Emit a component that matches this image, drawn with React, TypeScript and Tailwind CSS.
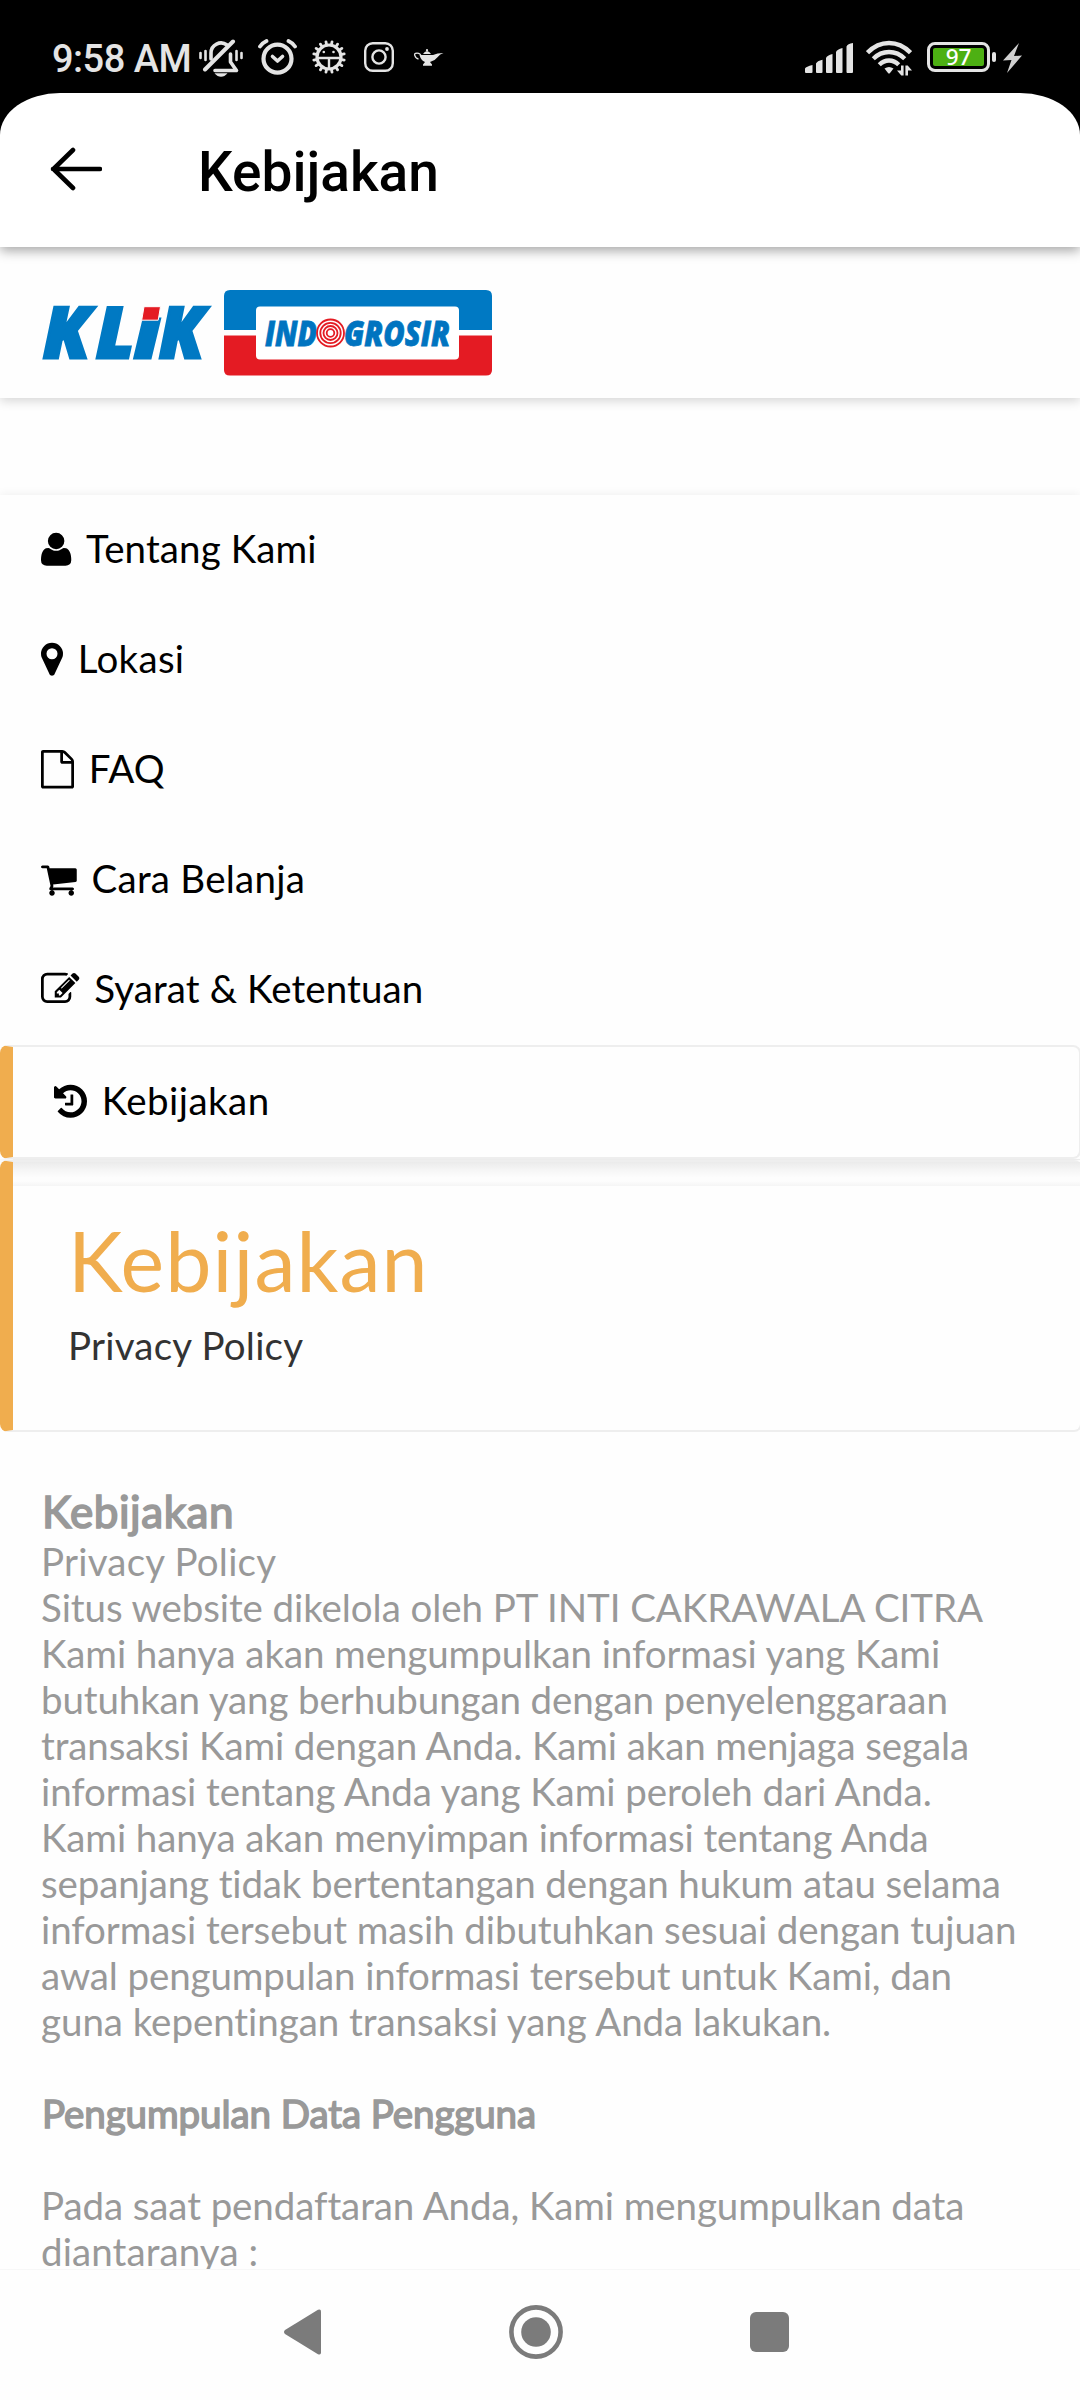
import React from "react";

const LATO = "font-[Lato,sans-serif]";

/* Font icons on a 1792-unit em, y axis pointing up from the baseline. */
function Glyph({ d, advance }: { d: string; advance: number }) {
  return (
    <svg
      viewBox={`0 -1536 ${advance} 1792`}
      style={{ width: (advance / 1792) * 38.5, height: 38.5 }}
      className="mr-[14.8px] mt-[2px] shrink-0 overflow-visible"
      fill="currentColor"
    >
      <path transform="scale(1,-1)" d={d} />
    </svg>
  );
}

/* Font icons on a 1792 square grid, y axis pointing down. */
function GridGlyph({ d, x, advance }: { d: string; x: number; advance: number }) {
  return (
    <svg
      viewBox={`${x} 0 ${advance} 1792`}
      style={{ width: (advance / 1792) * 38.5, height: 38.5 }}
      className="mr-[14.8px] mt-[2px] shrink-0 overflow-visible"
      fill="currentColor"
    >
      <path d={d} />
    </svg>
  );
}

const USER =
  "M1408 131q0-120-73-189.5t-194-69.5h-874q-121 0-194 69.5t-73 189.5q0 53 3.5 103.5t14 109t26.5 108.5t43 97.5t62 81t85.5 53.5t111.5 20q9 0 42-21.5t74.5-48t108-48t133.5-21.5t133.5 21.5t108 48t74.5 48t42 21.5q61 0 111.5-20t85.5-53.5t62-81t43-97.5t26.5-108.5t14-109t3.5-103.5zM1088 1024q0-159-112.5-271.5t-271.5-112.5t-271.5 112.5t-112.5 271.5t112.5 271.5t271.5 112.5t271.5-112.5t112.5-271.5z";
const MARKER =
  "M1152 640q0-106-75-181t-181-75-181 75-75 181 75 181 181 75 181-75 75-181zm256 0q0 109-33 179l-364 774q-16 33-47.5 52t-67.5 19-67.5-19-46.5-52l-365-774q-33-70-33-179 0-212 150-362t362-150 362 150 150 362z";
const FILE =
  "M1596 380q28 28 48 76t20 88v1152q0 40-28 68t-68 28h-1344q-40 0-68-28t-28-68v-1600q0-40 28-68t68-28h896q40 0 88 20t76 48zm-444-244v376h376q-10-29-22-41l-313-313q-12-12-41-22zm384 1528v-1024h-416q-40 0-68-28t-28-68v-416h-768v1536h1280z";
const CART =
  "M704 1536q0 52-38 90t-90 38-90-38-38-90 38-90 90-38 90 38 38 90zm896 0q0 52-38 90t-90 38-90-38-38-90 38-90 90-38 90 38 38 90zm128-1088v512q0 24-16.5 42.5t-40.5 21.5l-1044 122q13 60 13 70 0 16-24 64h920q26 0 45 19t19 45-19 45-45 19h-1024q-26 0-45-19t-19-45q0-11 8-31.5t16-36 21.5-40 15.5-29.5l-177-823h-204q-26 0-45-19t-19-45 19-45 45-19h256q16 0 28.5 6.5t19.5 15.5 13 24.5 8 26 5.5 29.5 4.5 26h1201q26 0 45 19t19 45z";
const EDIT =
  "M888 1184l116-116-152-152-116 116v56h96v96h56zm440-720q-16-16-33 1l-350 350q-17 17-1 33t33-1l350-350q17-17 1-33zm80 594v190q0 119-84.5 203.5t-203.5 84.5h-832q-119 0-203.5-84.5t-84.5-203.5v-832q0-119 84.5-203.5t203.5-84.5h832q63 0 117 25 15 7 18 23 3 17-9 29l-49 49q-14 14-32 8-23-6-45-6h-832q-66 0-113 47t-47 113v832q0 66 47 113t113 47h832q66 0 113-47t47-113v-126q0-13 9-22l64-64q15-15 35-7t20 29zm-96-738l288 288-672 672h-288v-288zm444 132l-92 92-288-288 92-92q28-28 68-28t68 28l152 152q28 28 28 68t-28 68z";
const HISTORY =
  "M1664 896q0 156-61 298t-164 245-245 164-298 61q-172 0-327-72.5t-264-204.5q-7-10-6.5-22.5t8.5-20.5l137-138q10-9 25-9 16 2 23 12 73 95 179 147t225 52q104 0 198.5-40.5t163.5-109.5 109.5-163.5 40.5-198.5-40.5-198.5-109.5-163.5-163.5-109.5-198.5-40.5q-98 0-188 35.5t-160 101.5l137 138q31 30 14 69-17 40-59 40h-448q-26 0-45-19t-19-45v-448q0-42 40-59 39-17 69 14l130 129q107-101 244.5-156.5t284.5-55.5q156 0 298 61t245 164 164 245 61 298zm-640-288v448q0 14-9 23t-23 9h-320q-14 0-23-9t-9-23v-64q0-14 9-23t23-9h224v-352q0-14 9-23t23-9h64q14 0 23 9t9 23z";

function StatusBar() {
  const teeth = Array.from({ length: 16 }, (_, i) => i * 22.5 + 11.25);
  return (
    <div className="flex h-[93px] items-start bg-black pl-[52px] pt-[37px] text-[#e4e4e4]">
      <span className="w-[147px] whitespace-nowrap font-[Roboto,sans-serif] text-[38px] font-medium leading-[44px] tracking-[-0.5px]">
        9:58 AM
      </span>
      <svg className="mt-[2px] h-[38px] w-[44px]" viewBox="0 0 44 38" fill="none" stroke="currentColor" strokeLinecap="round">
        <path d="M12 20V14a10 10 0 0 1 16-8M31.500 15v8l6 8.500H16" strokeWidth="3.6" strokeLinejoin="round" />
        <path d="M6 30.500L34 2.500" strokeWidth="4" />
        <path d="M1.500 14v5M6.500 12v9M37.500 12v9M42.500 14v5" strokeWidth="2.600" />
        <path d="M15.500 34.300h13q-3 3.500-6.500 3.500t-6.500-3.500z" fill="currentColor" stroke="none" />
      </svg>
      <svg className="ml-[15px] mt-[2px] h-[37px] w-[39px]" viewBox="0 0 39 37" fill="none" stroke="currentColor" strokeLinecap="round">
        <circle cx="19.500" cy="19.700" r="14" strokeWidth="4.200" />
        <path d="M2 7.500q2.500-3.700 6.500-5.500M37 7.500q-2.500-3.700-6.500-5.500" strokeWidth="3.800" />
        <path d="M14.500 17.500l5 4.500 5-4.500" strokeWidth="3.600" strokeLinejoin="round" />
      </svg>
      <svg className="ml-[15px] mt-[3px] h-[34px] w-[34px]" viewBox="-17 -17 34 34" fill="none" stroke="currentColor">
        <circle r="12" strokeWidth="3.200" />
        {teeth.map((a) => (
          <path key={a} d="M0-13V-15.500" strokeWidth="2.800" strokeLinecap="round" transform={`rotate(${a})`} />
        ))}
        <path d="M-12 1H12M0 1V13" strokeWidth="2.400" />
        <circle cx="-5.200" cy="-5" r="1.300" fill="currentColor" stroke="none" />
        <circle cx="4.500" cy="-5" r="1.300" fill="currentColor" stroke="none" />
      </svg>
      <svg className="ml-[18px] mt-[5px] h-[30px] w-[30px]" viewBox="0 0 30 30" fill="none" stroke="currentColor" strokeWidth="2.400">
        <rect x="1.200" y="1.200" width="27.600" height="27.600" rx="7.500" />
        <circle cx="15" cy="15" r="6.600" />
        <circle cx="23" cy="7" r="1.900" fill="currentColor" stroke="none" />
      </svg>
      <svg className="ml-[20px] mt-[12px] h-[17px] w-[30px]" viewBox="0 0 30 17" fill="currentColor">
        <circle cx="13" cy="1.200" r="1.100" />
        <path d="M9 5q1.500-2.600 4-2.900 2.500.3 4 2.900z" />
        <path d="M5.500 6H19q4-1.800 10.500-2-3.500.8-6 4.200-2.500 3.500-7.500 4.800l2 2.500v1.300H9v-1.300l2-2.500Q7 11.500 5.500 6z" />
        <path d="M7.500 8Q6.500 4.200 3 4.200T1 6.800Q1.200 9 4.500 10.200" fill="none" stroke="currentColor" strokeWidth="1.300" />
      </svg>
      <svg className="ml-[361px] mt-[6px] h-[30px] w-[48px]" viewBox="0 0 48 30" fill="currentColor">
        <path d="M0 29V25.500Q1 23.500 7.500 22V29q0 1-1 1H1q-1 0-1-1zM11 29V20.500Q12 18 17.500 16.700V29q0 1-1 1h-4.500q-1 0-1-1zM21 29V15Q22 12.500 27.500 11V29q0 1-1 1H22q-1 0-1-1zM31 29V9Q32 6.500 37.500 5V29q0 1-1 1H32q-1 0-1-1zM41.500 29V3.500Q42.500.5 48 0V29q0 1-1 1h-4.500q-1 0-1-1z" />
      </svg>
      <svg className="ml-[13px] mt-[3px] h-[36px] w-[46px]" viewBox="0 0 46 36" fill="none" stroke="currentColor">
        <path d="M1.500 12.700Q11 3 23 3t21.500 9.700M7.300 18.700Q14 12 23 12t15.700 6.700M13.300 24.700Q17.500 20.500 23 20.500t9.700 4.200" strokeWidth="4.400" />
        <path d="M18.500 28.500q4.500-3 9 0L24 33q-1 1-2 0z" fill="currentColor" stroke="none" />
        <path d="M35 25.500h2.600v10h-2.300L31 30.500h4zM39.400 25.500h2.300l4.300 5h-4v5h-2.600z" fill="currentColor" stroke="none" />
      </svg>
      <div className="ml-[15px] mt-[5px] flex h-[30px] w-[63px] rounded-[8px] border-[3px] border-[#e4e4e4] p-[3px]">
        <span className="flex flex-1 items-center justify-center rounded-[2px] bg-[#4db013] font-['Noto_Sans',sans-serif] text-[22.500px] font-medium leading-none text-white">
          97
        </span>
      </div>
      <span className="ml-[2px] mt-[10px] h-[10px] w-[4px] translate-y-[5px] rounded-[2px] bg-[#e4e4e4]" />
      <svg className="ml-[7px] mt-[6px] h-[30px] w-[19px] text-[#d0d0d0]" viewBox="0 0 19 30" fill="currentColor">
        <path d="M16 0L0 17.500l8.500-.5L4 30 19 12.500l-8 .5z" />
      </svg>
    </div>
  );
}

function Header() {
  return (
    <div className="bg-black">
      <header className="relative z-20 flex h-[154px] items-start rounded-t-[60px_42px] bg-white shadow-[0_4px_12px_rgba(0,0,0,0.34)] [clip-path:inset(0_0_-30px_0)]">
        <svg className="ml-[50px] mt-[54px] h-[44px] w-[52px]" viewBox="0 0 52 44" fill="none" stroke="#000" strokeWidth="4.600" strokeLinecap="round" strokeLinejoin="round">
          <path d="M50 22H3M23 3L3.500 22 23 41" />
        </svg>
        <h1 className="ml-[96px] mt-[46px] whitespace-nowrap font-[Roboto,sans-serif] text-[55px] font-medium leading-[66px] text-black">
          Kebijakan
        </h1>
      </header>
    </div>
  );
}

function Logo() {
  const face = "font-['Open_Sans',sans-serif] font-extrabold italic";
  return (
    <svg className="h-[86px] w-[452px] overflow-visible" viewBox="41 290 452 86">
      <g className={`${face} text-[71px]`} fill="#0079c3" stroke="#0079c3" strokeWidth="3">
        <text x="43" y="358.300" textLength="47" lengthAdjust="spacingAndGlyphs">K</text>
        <text x="96" y="358.300" textLength="38" lengthAdjust="spacingAndGlyphs">L</text>
        <text x="134" y="358.300" textLength="26" lengthAdjust="spacingAndGlyphs">ı</text>
        <text x="159" y="358.300" textLength="45" lengthAdjust="spacingAndGlyphs">K</text>
      </g>
      <path d="M144 306.700h16.500l-2.300 13.500h-16.500z" fill="#e41b23" stroke="#fff" strokeWidth="1" />
      <path d="M224 330V296q0-6 6-6h256q6 0 6 6v34z" fill="#0079c3" />
      <path d="M224 335.500V370q0 5.500 6 5.500h256q6 0 6-5.500V335.500z" fill="#e41b23" />
      <rect x="256" y="306.500" width="203" height="53" rx="4" fill="#fff" />
      <g className={`${face} text-[36px]`} fill="#0074c0" stroke="#0074c0" strokeWidth=".8">
        <text x="265" y="345.500" textLength="52" lengthAdjust="spacingAndGlyphs">IND</text>
        <text x="344" y="345.500" textLength="106" lengthAdjust="spacingAndGlyphs">GROSIR</text>
      </g>
      <g fill="#fff" stroke="#e41b23" strokeWidth="1.800">
        <circle cx="330.500" cy="333" r="13.500" />
        <circle cx="330.500" cy="333" r="10.200" />
        <circle cx="330.500" cy="333" r="7" />
        <circle cx="330.500" cy="333" r="3.800" />
      </g>
    </svg>
  );
}

const row = "flex h-[110px] items-center pb-[4px] pl-[41px] whitespace-nowrap";

function Menu() {
  return (
    <nav className={`${LATO} bg-[#fefefe] text-[38.500px] leading-[46px] text-black shadow-[0_0_10px_rgba(0,0,0,0.07)]`}>
      <a className={row}><Glyph d={USER} advance={1408} /><span className="tracking-[0.1px]">Tentang Kami</span></a>
      <a className={row}><GridGlyph d={MARKER} x={384} advance={1024} /><span className="tracking-[0.3px]">Lokasi</span></a>
      <a className={row}><GridGlyph d={FILE} x={128} advance={1536} /><span>FAQ</span></a>
      <a className={row}><GridGlyph d={CART} x={64} advance={1664} /><span className="tracking-[0.25px]">Cara Belanja</span></a>
      <a className={row}><GridGlyph d={EDIT} x={0} advance={1792} /><span className="tracking-[0.09px]">Syarat &amp; Ketentuan</span></a>
      <a className="mr-[-1px] flex h-[114px] items-center whitespace-nowrap rounded-[8px] border-2 border-l-[13px] border-[#eee] border-l-[#f0ad4e] pb-[4px] pl-[41px]">
        <GridGlyph d={HISTORY} x={128} advance={1536} /><span className="tracking-[0.45px]">Kebijakan</span>
      </a>
    </nav>
  );
}

function Callout() {
  return (
    <>
      <div className="relative ml-[13px] h-[1px] bg-[#ececec]" />
      <section className={`${LATO} relative mr-[-2px] h-[272px] rounded-[8px] border-2 border-l-[13px] border-[#eee] border-l-[#f0ad4e] bg-[#fefefe]`}>
        <div className="h-[24px] bg-[linear-gradient(#ebebeb,#f6f6f6_35%,#fdfdfd_65%,#fdfdfd_80%,#f5f5f5)]" />
        <div className="pl-[55px] pt-[25px]">
          <h2 className="whitespace-nowrap text-[82.500px] leading-[99px] tracking-[1.1px] text-[#f0ad4e]">Kebijakan</h2>
          <p className="mt-[12px] whitespace-nowrap text-[38.500px] leading-[46px] tracking-[0.22px] text-[#333]">Privacy Policy</p>
        </div>
      </section>
    </>
  );
}

const policyLines: [string, number][] = [
  ["Privacy Policy", 0.22],
  ["Situs website dikelola oleh PT INTI CAKRAWALA CITRA", -0.075],
  ["Kami hanya akan mengumpulkan informasi yang Kami", -0.09],
  ["butuhkan yang berhubungan dengan penyelenggaraan", -0.12],
  ["transaksi Kami dengan Anda. Kami akan menjaga segala", -0.115],
  ["informasi tentang Anda yang Kami peroleh dari Anda.", -0.06],
  ["Kami hanya akan menyimpan informasi tentang Anda", -0.1],
  ["sepanjang tidak bertentangan dengan hukum atau selama", -0.13],
  ["informasi tersebut masih dibutuhkan sesuai dengan tujuan", -0.08],
  ["awal pengumpulan informasi tersebut untuk Kami, dan", -0.12],
  ["guna kepentingan transaksi yang Anda lakukan.", -0.05],
];

function Policy() {
  return (
    <article className={`${LATO} h-[837px] overflow-hidden whitespace-nowrap pl-[41px] pt-[53px] text-[38.500px] leading-[46px] text-[#999]`}>
      <h3 className="pl-[1px] text-[44px] leading-[53px] tracking-[0.55px] [-webkit-text-stroke:1.700px_#999]">Kebijakan</h3>
      {policyLines.map(([line, tracking]) => (
        <p key={line} style={{ letterSpacing: tracking }}>{line}</p>
      ))}
      <h4 className="mt-[46px] pl-[1px] tracking-[-0.08px] [-webkit-text-stroke:1.500px_#999]">Pengumpulan Data Pengguna</h4>
      <p className="mt-[46px] tracking-[-0.09px]">Pada saat pendaftaran Anda, Kami mengumpulkan data</p>
      <p className="tracking-[0.1px]">diantaranya :</p>
    </article>
  );
}

function NavBar() {
  return (
    <footer className="flex h-[131px] items-start border-t border-[#f7f7f7] bg-[#fefefe] pl-[284px] text-[#7b7b7b]">
      <svg className="mt-[39px] h-[46px] w-[37px]" viewBox="0 0 37 46" fill="currentColor">
        <path d="M1 21L34 .8Q37-.5 37 2.500V43.500q0 3-3 1.700L1 25q-2-2 0-4z" />
      </svg>
      <svg className="ml-[188px] mt-[35px] h-[54px] w-[54px]" viewBox="0 0 54 54">
        <circle cx="27" cy="27" r="24.600" fill="none" stroke="currentColor" strokeWidth="4.600" />
        <circle cx="27" cy="27" r="14.800" fill="currentColor" />
      </svg>
      <span className="ml-[187px] mt-[42px] h-[40px] w-[39px] rounded-[6px] bg-[#7b7b7b]" />
    </footer>
  );
}

export default function App() {
  return (
    <div className="flex h-[2400px] w-[1080px] flex-col overflow-hidden bg-[#fefefe]">
      <StatusBar />
      <Header />
      <div className="h-[151px] bg-[#fefefe] pl-[41px] pt-[43px] shadow-[0_3px_10px_rgba(0,0,0,0.16)]">
        <Logo />
      </div>
      <div className="h-[97px]" />
      <Menu />
      <Callout />
      <Policy />
      <NavBar />
    </div>
  );
}
